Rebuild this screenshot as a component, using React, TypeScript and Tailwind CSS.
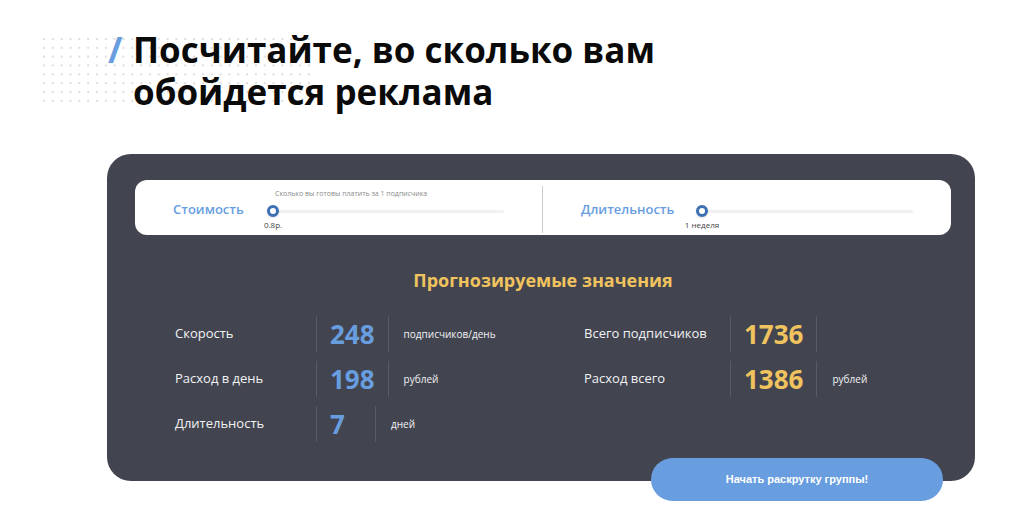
import { useState } from 'react'

const PERIODS = ['1 неделя', '2 недели', '3 недели', '4 недели']

const sliderClass =
  'block h-3 w-full cursor-pointer appearance-none bg-transparent [&::-webkit-slider-runnable-track]:h-[3px] [&::-webkit-slider-runnable-track]:rounded-sm [&::-webkit-slider-runnable-track]:bg-[#f1f1f1] [&::-webkit-slider-thumb]:-mt-[5px] [&::-webkit-slider-thumb]:h-3 [&::-webkit-slider-thumb]:w-3 [&::-webkit-slider-thumb]:appearance-none [&::-webkit-slider-thumb]:rounded-full [&::-webkit-slider-thumb]:border-[3px] [&::-webkit-slider-thumb]:border-[#3d6fb3] [&::-webkit-slider-thumb]:bg-white [&::-webkit-slider-thumb]:shadow'

function DotGrid() {
  return (
    <svg className="absolute top-[37px] left-[42px]" width="270" height="66" aria-hidden="true">
      <defs>
        <pattern id="dots" width="8.83" height="8.83" patternUnits="userSpaceOnUse">
          <circle cx="2" cy="2" r="0.9" fill="#cfcfd2" />
        </pattern>
      </defs>
      <rect width="270" height="66" fill="url(#dots)" />
    </svg>
  )
}

function Stat({ label, value, unit, gold }: { label: string; value: number; unit?: string; gold?: boolean }) {
  return (
    <div className="flex h-9 items-center">
      <dt className={`shrink-0 text-[13px] text-[#f2f2f4] ${gold ? 'w-[146px]' : 'w-[141px]'}`}>{label}</dt>
      <dd className="flex h-full items-center">
        <span
          className={`flex h-full min-w-[60px] items-center border-x border-[#585b66] px-[13px] text-[26px] font-bold ${gold ? 'text-[#f0c35e]' : 'text-[#689ddf]'}`}
        >
          {value}
        </span>
        {unit && <span className="pl-[15px] text-[10px] text-[#f2f2f4]">{unit}</span>}
      </dd>
    </div>
  )
}

export default function App() {
  const [price, setPrice] = useState(0.8)
  const [period, setPeriod] = useState(0)

  const speed = Math.round(price * 310)
  const perDay = Math.floor(speed * price)
  const days = (period + 1) * 7

  return (
    <main className="relative bg-white pt-[29px] pr-[49px] pb-6 pl-[107px] font-['Open_Sans',sans-serif]">
      <DotGrid />
      <h1 className="relative flex text-[35px] leading-[42px] font-bold text-[#0a0a0a]">
        <span className="w-[26px] shrink-0 pl-px text-[#689ddf]">/</span>
        <span>
          Посчитайте, во сколько вам
          <br />
          обойдется реклама
        </span>
      </h1>

      <section className="mt-[41px] rounded-3xl bg-[#424550] pt-[26px] pr-6 pl-7">
        <div className="grid h-[55px] grid-cols-2 items-center rounded-xl bg-white">
          <div className="flex items-center pl-[38px]">
            <label htmlFor="price" className="w-[94px] shrink-0 pt-1 text-[13px] font-semibold text-[#689ddf]">
              Стоимость
            </label>
            <div className="flex-1 pt-1 pr-[38px]">
              <p className="h-4 pl-2 text-[7px] leading-[10px] text-[#8a8a8a]">Сколько вы готовы платить за 1 подписчика</p>
              <input
                id="price"
                type="range"
                min={0.8}
                max={5}
                step={0.1}
                value={price}
                onChange={(e) => setPrice(Number(e.target.value))}
                className={sliderClass}
              />
              <output htmlFor="price" className="-ml-3 block w-9 pt-[3px] text-center text-[8px] leading-[10px] text-[#444444]">
                {price}р.
              </output>
            </div>
            <div className="mt-1 h-[47px] w-px bg-[#cccccc]" />
          </div>
          <div className="flex items-center px-[38px]">
            <label htmlFor="period" className="w-[115px] shrink-0 pt-1 text-[13px] font-semibold text-[#689ddf]">
              Длительность
            </label>
            <div className="flex-1 pt-5">
              <input
                id="period"
                type="range"
                min={0}
                max={3}
                value={period}
                onChange={(e) => setPeriod(Number(e.target.value))}
                className={sliderClass}
              />
              <output
                htmlFor="period"
                className="-ml-3 block w-9 pt-[3px] text-center text-[8px] leading-[10px] whitespace-nowrap text-[#444444]"
              >
                {PERIODS[period]}
              </output>
            </div>
          </div>
        </div>

        <h2 className="mt-8 text-center text-lg leading-[26px] font-bold text-[#f0c35e]">Прогнозируемые значения</h2>

        <div className="mt-[23px] grid grid-cols-2 pl-10">
          <dl className="flex flex-col gap-[9px]">
            <Stat label="Скорость" value={speed} unit="подписчиков/день" />
            <Stat label="Расход в день" value={perDay} unit="рублей" />
            <Stat label="Длительность" value={days} unit="дней" />
          </dl>
          <dl className="flex flex-col gap-[9px] pl-[21px]">
            <Stat label="Всего подписчиков" value={speed * days} gold />
            <Stat label="Расход всего" value={perDay * days} unit="рублей" gold />
          </dl>
        </div>

        <div className="mt-4 flex justify-end pr-2">
          <button
            type="button"
            className="-mb-5 h-[43px] w-[292px] rounded-full bg-[#689ddf] font-['Liberation_Sans',sans-serif] text-[11px] font-bold text-white"
          >
            Начать раскрутку группы!
          </button>
        </div>
      </section>
    </main>
  )
}
